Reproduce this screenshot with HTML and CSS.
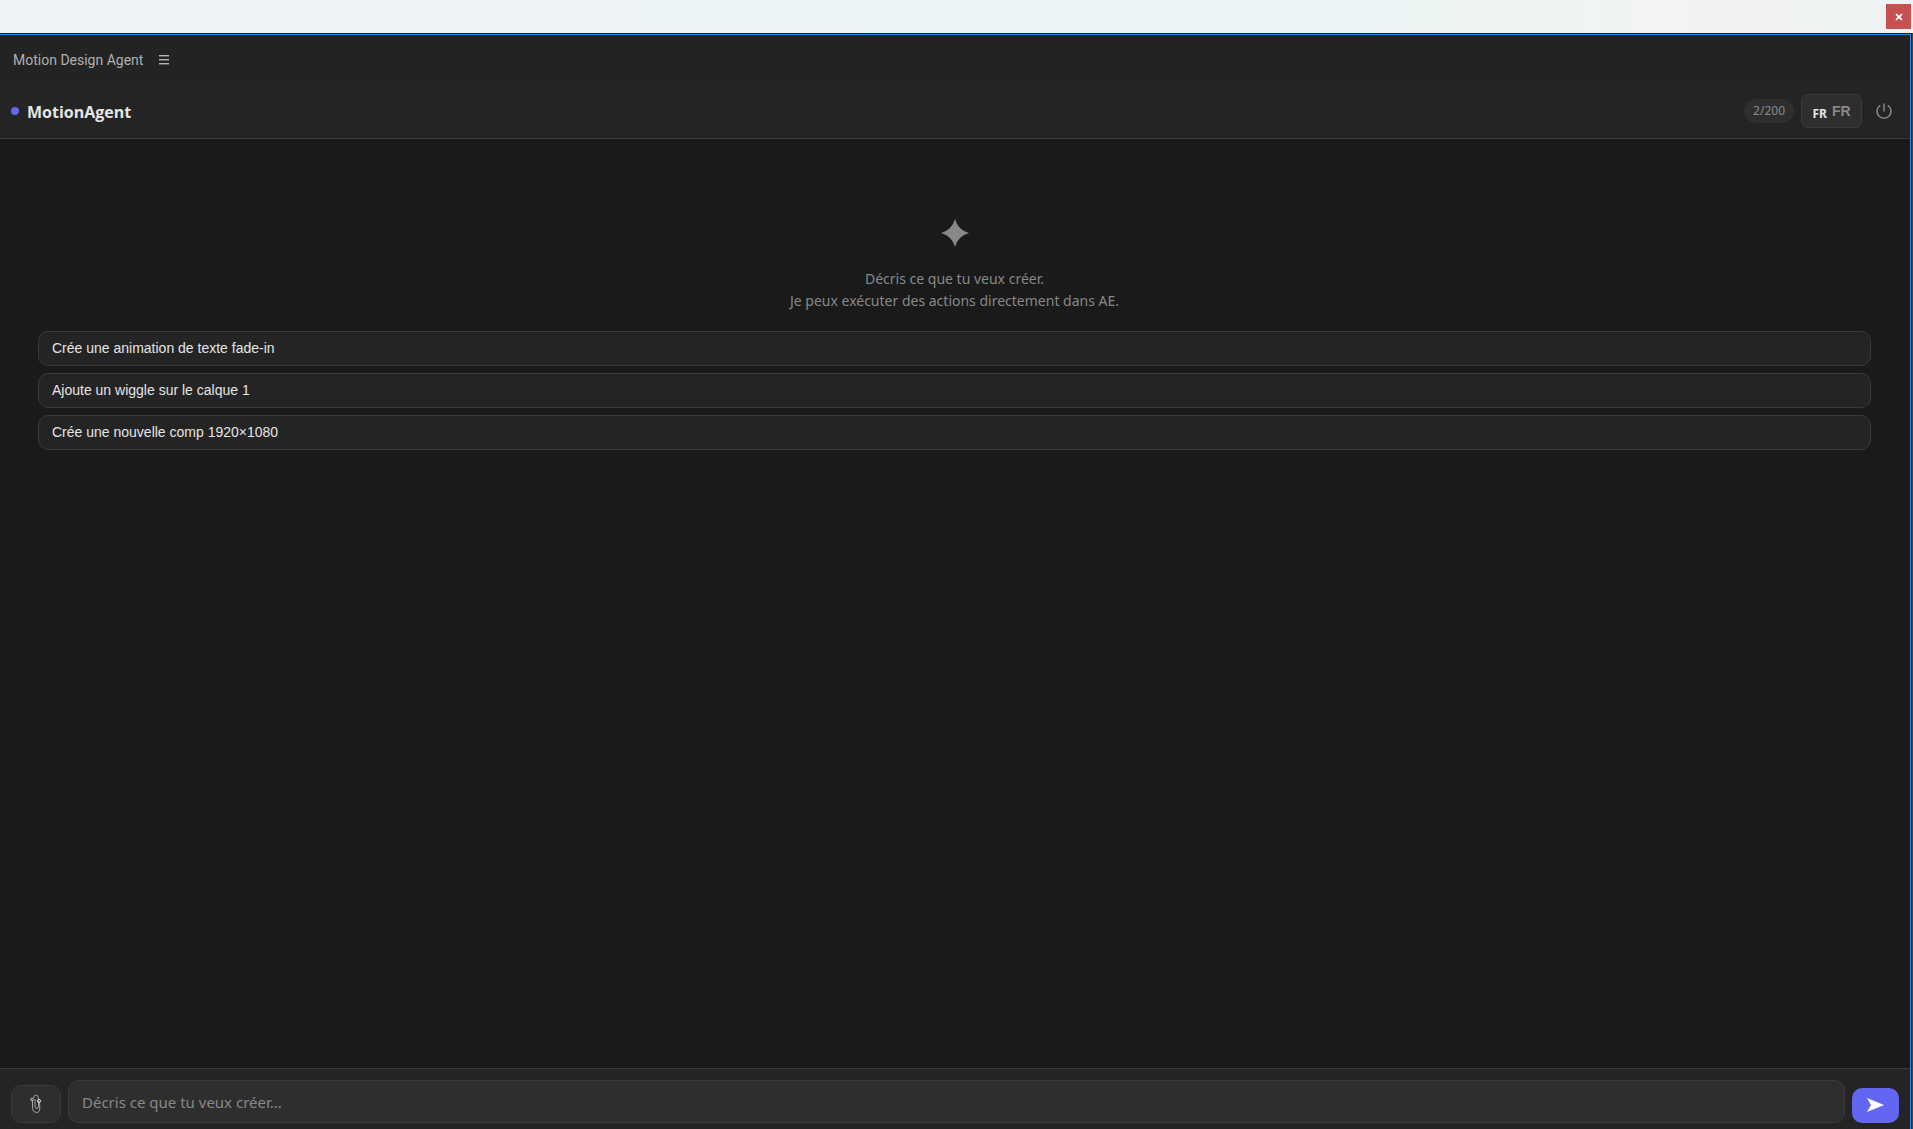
FILE: index.html
```html
<!DOCTYPE html>
<html lang="fr">
<head>
<meta charset="utf-8">
<title>Motion Design Agent</title>
<link rel="stylesheet" href="styles.css">
</head>
<body>
<div class="window">
  <div class="titlebar">
    <button class="close" type="button" aria-label="Fermer">
      <svg width="8" height="8" viewBox="0 0 8 8"><path d="M1 1.200L7 6.800M7 1.200L1 6.800" stroke="#fff" stroke-width="1.800"/></svg>
    </button>
  </div>
  <div class="frame">
    <div class="panel">
      <div class="tabbar">
        <span class="tab-name">Motion Design Agent</span>
        <button class="menu" type="button" aria-label="Menu du panneau">
          <svg width="10" height="10" viewBox="0 0 10 10"><path d="M0 .5H10M0 4.500H10M0 8.500H10" stroke="#b4b4b4"/><path d="M0 1.500H10M0 5.500H10M0 9.500H10" stroke="#606060"/></svg>
        </button>
      </div>
      <header class="header">
        <span class="dot"></span>
        <h1 class="brand">MotionAgent</h1>
        <span class="quota">2/200</span>
        <button class="lang" type="button"><span class="flag">FR</span><span class="code">FR</span></button>
        <button class="power" type="button" aria-label="Déconnexion">
          <svg width="16" height="16" viewBox="0 0 16 16" fill="none" stroke="#888" stroke-width="1.500"><path d="M8 .5V8.500M4.300 2.300A7 7 0 1 0 11.700 2.300"/></svg>
        </button>
      </header>
      <main class="chat">
        <svg class="star" width="28" height="28" viewBox="0 0 28 28"><path d="M14 0Q17 11 28 14Q17 17 14 28Q11 17 0 14Q11 11 14 0Z" fill="#888"/></svg>
        <p class="intro">Décris ce que tu veux créer.<br>Je peux exécuter des actions directement dans AE.</p>
        <div class="suggestions">
          <button class="suggestion" type="button">Crée une animation de texte fade-in</button>
          <button class="suggestion" type="button">Ajoute un wiggle sur le calque 1</button>
          <button class="suggestion" type="button">Crée une nouvelle comp 1920×1080</button>
        </div>
      </main>
      <form class="composer">
        <button class="attach" type="button" aria-label="Joindre un fichier">
          <svg width="12" height="20" viewBox="0 0 12 20" fill="none" stroke="#a4a4a4"><path d="M2.500 6V14.500Q3 18.500 6.500 18.500Q10 18.500 9.800 14L9.500 7.500M3.500 4Q4 1 6.500 1Q8.500 1.200 8.500 5V12.500Q8.500 14.500 7 14.500Q5 14.500 5 12V5"/><circle cx="2" cy="5.500" r="1.300" stroke="#d8c4cc"/><circle cx="9" cy="7" r="1.600" stroke="#d8c4cc"/></svg>
        </button>
        <input class="prompt" type="text" aria-label="Message" placeholder="Décris ce que tu veux créer...">
        <button class="send" type="submit" aria-label="Envoyer">
          <svg width="17" height="14" viewBox="0 0 17 14"><path d="M0 0L17 7L0 14L4 7Z" fill="#fff"/></svg>
        </button>
      </form>
    </div>
  </div>
</div>
</body>
</html>
```
FILE: styles.css
```css
* { box-sizing: border-box; }

body {
  margin: 0;
  background: #1a1a1a;
  color: #e5e5e5;
  font-family: "Noto Sans", "Open Sans", sans-serif;
}

button, input { margin: 0; font-family: inherit; }

button {
  display: flex;
  align-items: center;
  justify-content: center;
  padding: 0;
  border: 0;
  background: none;
  cursor: pointer;
}

.window {
  display: flex;
  flex-direction: column;
  min-height: 100vh;
}

.titlebar {
  display: flex;
  justify-content: flex-end;
  height: 33px;
  padding: 4px 2px 0;
  background: linear-gradient(90deg, #eff3f5 0%, #eff3f5 25%, #eaf4f5 50%, #ebf5f5 70%, #f2f4f1 88%, #eff3f4 100%);
}

.close { width: 25px; height: 25px; background: #c75050; }

.frame {
  display: flex;
  flex: 1;
  padding: 1px 1px 0 0;
  background: #1a1a1a;
  border-right: 1px solid #444;
}

.panel {
  display: flex;
  flex: 1;
  flex-direction: column;
  border-top: 1px solid #2d8ceb;
  border-right: 1px solid #2d8ceb;
}

.tabbar {
  display: flex;
  align-items: center;
  gap: 16px;
  height: 49px;
  padding: 0 13px;
  background: #232323;
}

.tab-name { color: #b0b0b0; font-family: Roboto, "Noto Sans", sans-serif; font-size: 14px; }

.header {
  display: flex;
  align-items: center;
  height: 55px;
  padding: 0 18px 0 11px;
  background: #242424;
  border-bottom: 1px solid #3a3a3a;
}

.dot { width: 8px; height: 8px; border-radius: 50%; background: #6366f1; }

.brand { flex: 1; margin: 0 0 0 8px; padding-top: 2px; font-family: "Open Sans", sans-serif; font-size: 16px; font-weight: 700; }

.quota {
  padding: 0 9px;
  border-radius: 12px;
  background: #2e2e2e;
  color: #888;
  font-size: 12px;
  line-height: 24px;
}

.lang {
  gap: 5px;
  width: 61px;
  height: 34px;
  margin: 0 14px 0 7px;
  border: 1px solid #3a3a3a;
  border-radius: 7px;
  background: #2e2e2e;
}

.flag { padding-top: 4px; color: #e5e5e5; font-size: 12px; font-weight: 700; }

.code { color: #888; font-family: "Liberation Sans", Arial, sans-serif; font-size: 14px; font-weight: 700; }

.chat {
  display: flex;
  flex: 1;
  flex-direction: column;
  align-items: center;
  padding: 80px 39px 24px 38px;
}

.intro {
  margin: 21px 0 19px;
  color: #888;
  font-size: 14px;
  line-height: 22px;
  text-align: center;
}

.suggestions { display: flex; flex-direction: column; gap: 7px; width: 100%; }

.suggestion {
  justify-content: flex-start;
  height: 35px;
  padding: 0 13px 2px;
  border: 1px solid #3a3a3a;
  border-radius: 10px;
  background: #242424;
  color: #e5e5e5;
  font-family: "Liberation Sans", Arial, sans-serif;
  font-size: 14px;
}

.composer {
  display: flex;
  align-items: flex-end;
  gap: 7px;
  padding: 11px 11px 6px;
  background: #242424;
  border-top: 1px solid #3a3a3a;
}

.attach {
  width: 50px;
  height: 38px;
  border: 1px solid #3a3a3a;
  border-radius: 10px;
  background: #2e2e2e;
}

.prompt {
  flex: 1;
  min-width: 0;
  height: 43px;
  padding: 0 13px;
  border: 1px solid #3a3a3a;
  border-radius: 10px;
  outline: 0;
  background: #2e2e2e;
  color: #e5e5e5;
  font-size: 15px;
}

.prompt::placeholder { color: #888; opacity: 1; }

.send { width: 47px; height: 35px; padding-bottom: 2px; border-radius: 10px; background: #6366f1; }
```
